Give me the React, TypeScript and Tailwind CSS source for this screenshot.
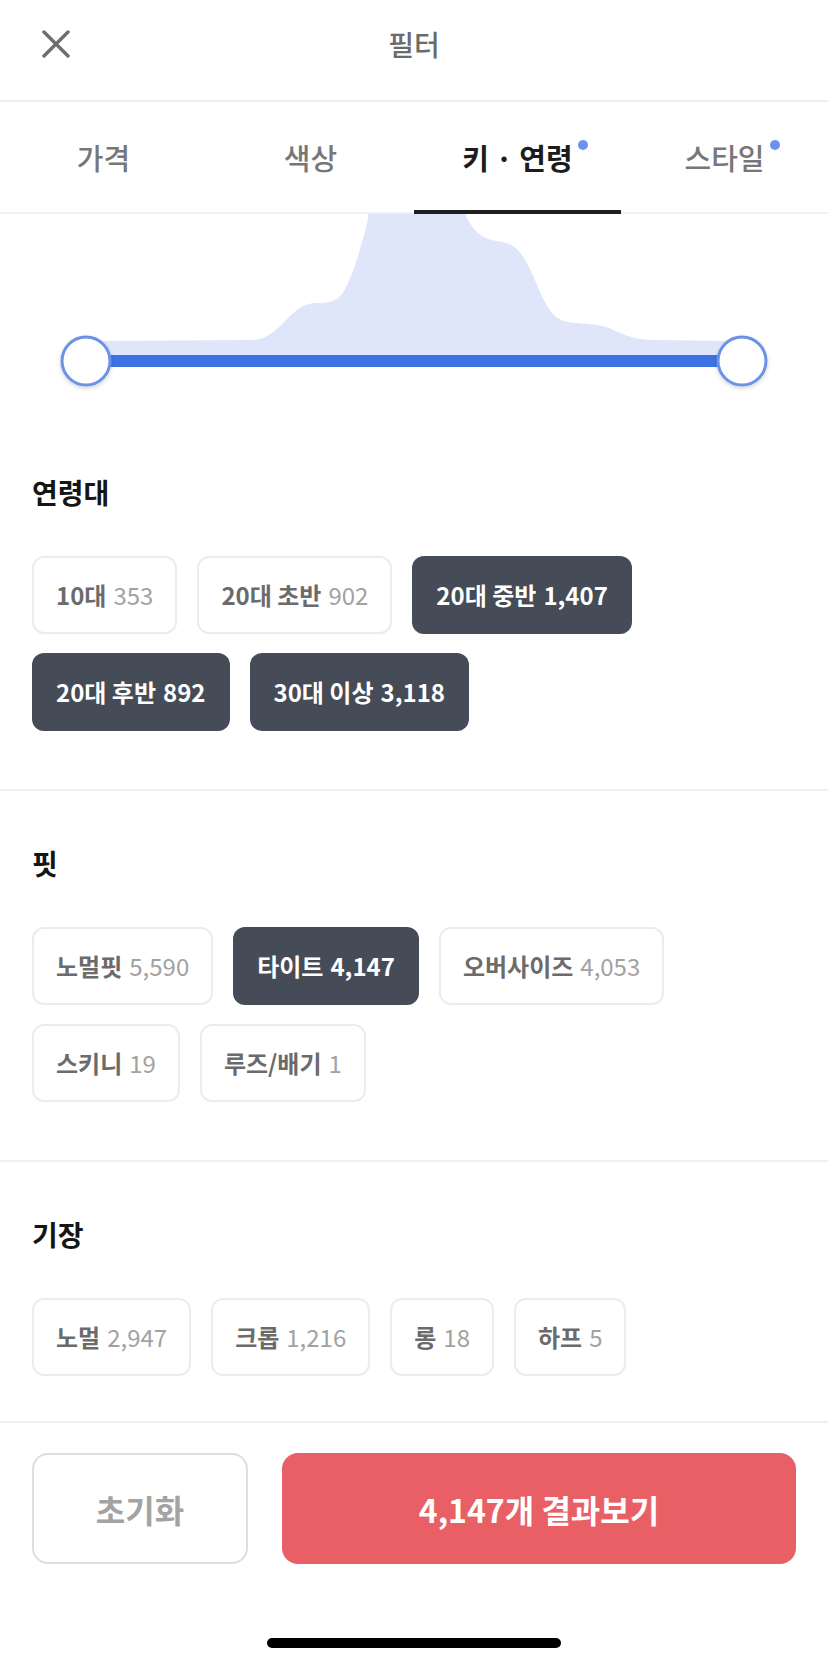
import React from 'react';

type Chip = { label: string; count: string; selected?: boolean };

const sections: { title: string; chips: Chip[] }[] = [
  {
    title: '연령대',
    chips: [
      { label: '10대', count: '353' },
      { label: '20대 초반', count: '902' },
      { label: '20대 중반', count: '1,407', selected: true },
      { label: '20대 후반', count: '892', selected: true },
      { label: '30대 이상', count: '3,118', selected: true },
    ],
  },
  {
    title: '핏',
    chips: [
      { label: '노멀핏', count: '5,590' },
      { label: '타이트', count: '4,147', selected: true },
      { label: '오버사이즈', count: '4,053' },
      { label: '스키니', count: '19' },
      { label: '루즈/배기', count: '1' },
    ],
  },
  {
    title: '기장',
    chips: [
      { label: '노멀', count: '2,947' },
      { label: '크롭', count: '1,216' },
      { label: '롱', count: '18' },
      { label: '하프', count: '5' },
    ],
  },
];

const tabs = [
  { label: '가격' },
  { label: '색상' },
  { label: '키 · 연령', active: true, dot: true },
  { label: '스타일', dot: true },
];

function CloseIcon() {
  return (
    <svg width="28" height="28" viewBox="0 0 28 28" fill="none">
      <path d="M2 2 L26 26 M26 2 L2 26" stroke="#6e6e6e" strokeWidth="3.4" strokeLinecap="round" />
    </svg>
  );
}

function RangeChart() {
  // coordinates are page x, page y minus 214
  return (
    <svg width="828" height="196" viewBox="0 0 828 196" className="block">
      <defs>
        <filter id="knobShadow" x="-30%" y="-30%" width="160%" height="170%">
          <feDropShadow dx="0" dy="2" stdDeviation="2" floodColor="#000" floodOpacity="0.16" />
        </filter>
      </defs>
      <path
        d="M95,127 L250,126 C268,126 276,116 288,104 C298,94 306,89 316,89 C328,89 336,88 342,80 C352,66 362,30 368,5 L373,-60 L455,-60 L462,-10 C466,5 474,20 488,25 C496,28 505,27 513,32 C525,40 532,60 541,80 C549,98 556,106 568,108 C580,110 592,109 606,113 C620,118 630,126 655,126 L735,127 L735,142 L95,142 Z"
        fill="#dfe6f9"
      />
      <rect x="100" y="141" width="640" height="12" fill="#3d72e5" />
      <circle cx="86" cy="147" r="24" fill="#fff" stroke="#6c91ea" strokeWidth="3" filter="url(#knobShadow)" />
      <circle cx="742" cy="147" r="24" fill="#fff" stroke="#6c91ea" strokeWidth="3" filter="url(#knobShadow)" />
    </svg>
  );
}

function ChipButton({ chip }: { chip: Chip }) {
  return (
    <button
      className={
        chip.selected
          ? 'h-[78px] px-[24px] rounded-[12px] bg-[#454c58] flex items-center text-[24px] leading-none text-white'
          : 'h-[78px] px-[22px] rounded-[12px] border-2 border-[#ececec] bg-white flex items-center text-[24px] leading-none'
      }
    >
      <span className={chip.selected ? 'font-bold' : 'font-bold text-[#6b6b6b]'}>{chip.label}</span>
      <span className={chip.selected ? 'ml-[7px] font-semibold' : 'ml-[7px] font-normal text-[#a2a2a2]'}>
        {chip.count}
      </span>
    </button>
  );
}

export default function App() {
  return (
    <div
      className="w-[828px] h-[1664px] bg-white flex flex-col overflow-hidden"
      style={{ fontFamily: '"Noto Sans CJK KR", "Noto Sans", sans-serif' }}
    >
      {/* Header */}
      <div className="h-[102px] shrink-0 border-b-2 border-[#eeeeee] grid grid-cols-[1fr_auto_1fr] items-center pb-[12px] px-[42px]">
        <div className="flex items-center">
          <CloseIcon />
        </div>
        <div className="text-[28px] leading-none font-medium text-[#6b6b6b]">필터</div>
        <div />
      </div>

      {/* Tabs */}
      <div className="h-[112px] shrink-0 border-b-2 border-[#f1f1f1] grid grid-cols-4">
        {tabs.map((t) => (
          <div key={t.label} className="relative flex items-center justify-center">
            <span
              className={
                t.active
                  ? 'relative text-[29px] leading-none font-bold text-[#1c1c1c]'
                  : 'relative text-[29px] leading-none font-medium text-[#777777]'
              }
            >
              {t.label}
              {t.dot && (
                <span className="absolute -top-[3px] -right-[15px] w-[10px] h-[10px] rounded-full bg-[#6a92ee]" />
              )}
            </span>
            {t.active && <div className="absolute left-0 right-0 -bottom-[2px] h-[4px] bg-[#1f1f1f]" />}
          </div>
        ))}
      </div>

      {/* Scroll content */}
      <div className="flex-1 overflow-hidden">
        <div className="h-[196px] overflow-hidden">
          <RangeChart />
        </div>

        {sections.map((s, i) => (
          <div key={s.title}>
            <div className={i === 0 ? 'px-[32px] pt-[68px] pb-[58px]' : 'px-[32px] pt-[58px] pb-[58px]'}>
              <h3 className="text-[28px] leading-[28px] font-bold text-[#151515]">{s.title}</h3>
              <div className="mt-[50px] flex flex-wrap gap-x-[20px] gap-y-[19px]">
                {s.chips.map((c) => (
                  <ChipButton key={c.label} chip={c} />
                ))}
              </div>
            </div>
            {i < sections.length - 1 && <div className="h-[2px] bg-[#efefef]" />}
          </div>
        ))}
      </div>

      {/* Footer */}
      <div className="h-[243px] shrink-0 border-t-2 border-[#eeeeee] flex flex-col">
        <div className="pt-[30px] px-[32px] flex gap-[34px]">
          <button className="w-[216px] h-[111px] rounded-[16px] border-2 border-[#dedede] bg-white text-[32px] font-bold text-[#a3a3a3] flex items-center justify-center">
            초기화
          </button>
          <button className="flex-1 h-[111px] rounded-[16px] bg-[#e95f66] text-[32px] font-bold text-white flex items-center justify-center">
            4,147개 결과보기
          </button>
        </div>
        <div className="mt-auto mb-[16px] flex justify-center">
          <div className="w-[294px] h-[10px] rounded-full bg-black" />
        </div>
      </div>
    </div>
  );
}
